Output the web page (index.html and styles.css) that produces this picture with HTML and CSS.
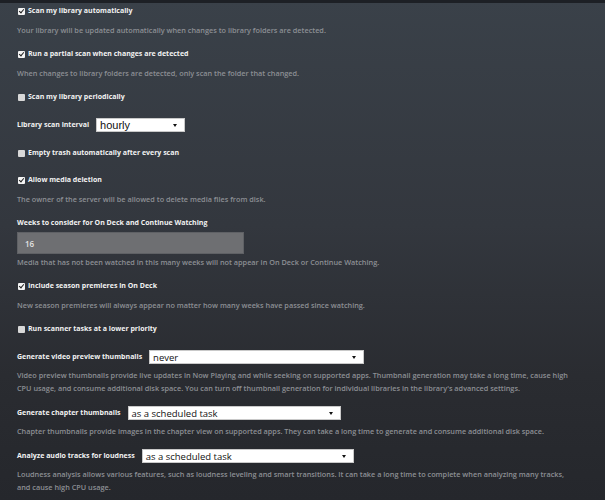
FILE: index.html
```html
<!DOCTYPE html>
<html lang="en">
<head>
<meta charset="utf-8">
<title>Library settings</title>
<link rel="stylesheet" href="styles.css">
</head>
<body>
<div class="top-strip"></div>
<main class="settings">
  <section class="item">
    <label class="check"><span class="box on"></span>Scan my library automatically</label>
    <p class="desc">Your library will be updated automatically when changes to library folders are detected.</p>
  </section>
  <section class="item">
    <label class="check"><span class="box on"></span>Run a partial scan when changes are detected</label>
    <p class="desc">When changes to library folders are detected, only scan the folder that changed.</p>
  </section>
  <section class="item solo">
    <label class="check"><span class="box"></span>Scan my library periodically</label>
  </section>
  <section class="item solo">
    <div class="field-row">
      <span class="label">Library scan interval</span>
      <div class="select hourly"><span>hourly</span><span class="arrow"></span></div>
    </div>
  </section>
  <section class="item solo">
    <label class="check"><span class="box"></span>Empty trash automatically after every scan</label>
  </section>
  <section class="item">
    <label class="check"><span class="box on"></span>Allow media deletion</label>
    <p class="desc">The owner of the server will be allowed to delete media files from disk.</p>
  </section>
  <section class="item weeks">
    <span class="label">Weeks to consider for On Deck and Continue Watching</span>
    <div class="text-input">16</div>
    <p class="desc tight">Media that has not been watched in this many weeks will not appear in On Deck or Continue Watching.</p>
  </section>
  <section class="item">
    <label class="check"><span class="box on"></span>Include season premieres in On Deck</label>
    <p class="desc">New season premieres will always appear no matter how many weeks have passed since watching.</p>
  </section>
  <section class="item solo">
    <label class="check"><span class="box"></span>Run scanner tasks at a lower priority</label>
  </section>
  <section class="item">
    <div class="field-row">
      <span class="label">Generate video preview thumbnails</span>
      <div class="select video"><span>never</span><span class="arrow"></span></div>
    </div>
    <p class="desc field-desc">Video preview thumbnails provide live updates in Now Playing and while seeking on supported apps. Thumbnail generation may take a long time, cause high CPU usage, and consume additional disk space. You can turn off thumbnail generation for individual libraries in the library's advanced settings.</p>
  </section>
  <section class="item">
    <div class="field-row">
      <span class="label">Generate chapter thumbnails</span>
      <div class="select chapter"><span>as a scheduled task</span><span class="arrow"></span></div>
    </div>
    <p class="desc field-desc">Chapter thumbnails provide images in the chapter view on supported apps. They can take a long time to generate and consume additional disk space.</p>
  </section>
  <section class="item">
    <div class="field-row">
      <span class="label">Analyze audio tracks for loudness</span>
      <div class="select audio"><span>as a scheduled task</span><span class="arrow"></span></div>
    </div>
    <p class="desc field-desc">Loudness analysis allows various features, such as loudness leveling and smart transitions. It can take a long time to complete when analyzing many tracks, and cause high CPU usage.</p>
  </section>
</main>
</body>
</html>
```
FILE: styles.css
```css
html, body {
  margin: 0;
  padding: 0;
}
body {
  width: 605px;
  height: 500px;
  overflow: hidden;
  background: linear-gradient(to bottom, #3a4149 0%, #33373e 45%, #2a2c31 75%, #25272c 100%);
  font-family: "Open Sans", "Liberation Sans", sans-serif;
  color: #ffffff;
}
.top-strip {
  height: 3px;
  background: #1d2025;
}
.settings {
  display: flex;
  flex-direction: column;
  padding: 2px 30px 0 17px;
}
.item {
  display: flex;
  flex-direction: column;
  margin-bottom: 11px;
}
.item.solo {
  margin-bottom: 15px;
}
.check, .label {
  display: flex;
  align-items: center;
  font-size: 7px;
  font-weight: 700;
  line-height: 12px;
  color: #f2f2f2;
  white-space: nowrap;
}
.box {
  width: 7px;
  height: 7px;
  margin: 0 3px 0 1px;
  background: #d8d8d8;
  border-radius: 1px;
  position: relative;
}
.box.on {
  background: #f4f4f4;
}
.box.on::after {
  content: "";
  position: absolute;
  left: 2px;
  top: 0px;
  width: 2px;
  height: 4px;
  border-right: 1.3px solid #222;
  border-bottom: 1.3px solid #222;
  transform: rotate(40deg);
}
.desc {
  margin: 7px 0 0 0;
  font-size: 7.3px;
  line-height: 13px;
  color: #8c8f94;
  font-weight: 600;
}
.desc.tight {
  margin-top: 2px;
}
.desc.field-desc {
  margin-top: 5px;
}
.field-row {
  display: flex;
  align-items: center;
  gap: 7px;
  height: 14px;
}
.select {
  height: 14px;
  box-sizing: border-box;
  background: #ffffff;
  border: 1px solid #c9c9c9;
  display: flex;
  align-items: center;
  justify-content: space-between;
  padding: 0 7px 0 3px;
  color: #111;
  font-size: 9.5px;
  font-family: "Open Sans", sans-serif;
}
.select.hourly {
  width: 89px;
  font-family: "Liberation Sans", Arial, sans-serif;
  font-size: 11px;
}
.select.video { width: 215px; }
.select.chapter { width: 213px; }
.select.audio { width: 212px; }
.arrow {
  width: 0;
  height: 0;
  border-left: 2px solid transparent;
  border-right: 2px solid transparent;
  border-top: 3px solid #111;
}
.weeks .label {
  margin-bottom: 3px;
}
.text-input {
  width: 227px;
  height: 22px;
  box-sizing: border-box;
  background: #6e6f72;
  border: 1px solid #5f6165;
  padding: 0 7px;
  display: flex;
  align-items: center;
  font-size: 8px;
  font-weight: 600;
  color: #e4e4e4;
}
```
